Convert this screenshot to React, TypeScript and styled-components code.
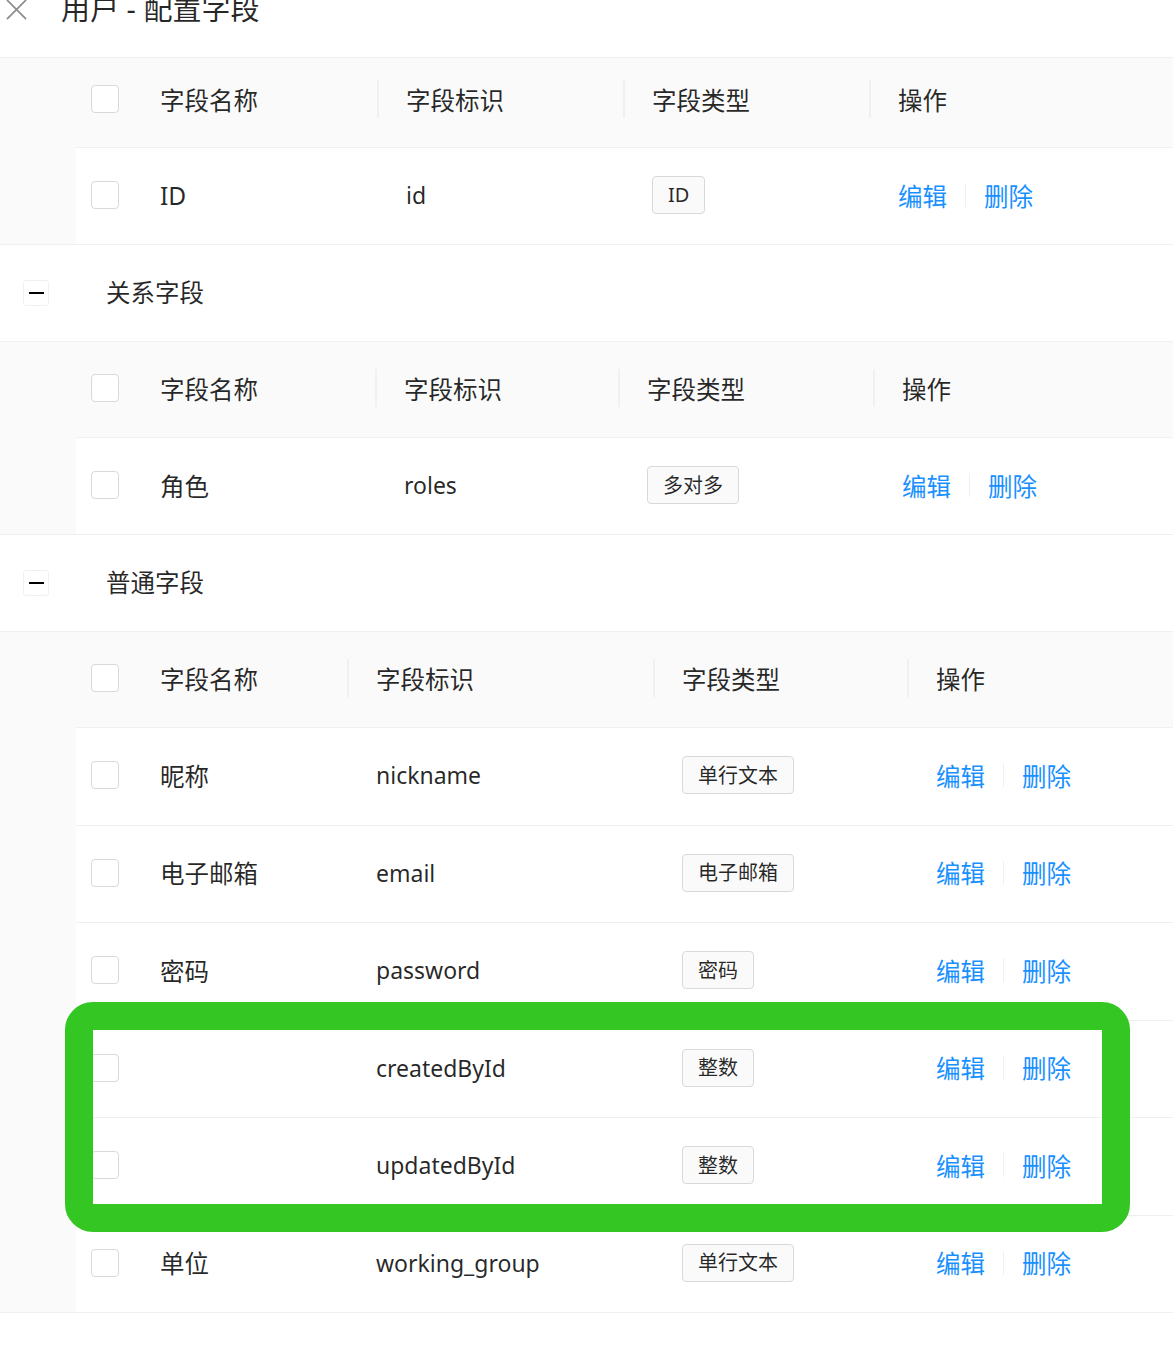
import React from 'react';
import styled, { createGlobalStyle } from 'styled-components';

type Field = { name: string; key: string; type: string };

const GlobalStyle = createGlobalStyle`
  body {
    margin: 0;
    background: #fff;
    font-family: "Noto Sans", "Noto Sans CJK SC", sans-serif;
    color: rgba(0, 0, 0, 0.85);
  }
`;

const TABLE_1 = '55px 246px 246px 246px 1fr';
const TABLE_2 = '55px 244px 243px 255px 1fr';
const TABLE_3 = '55px 216px 306px 254px 1fr';

const systemFields: Field[] = [{ name: 'ID', key: 'id', type: 'ID' }];
const relationFields: Field[] = [{ name: '角色', key: 'roles', type: '多对多' }];
const normalFields: Field[] = [
  { name: '昵称', key: 'nickname', type: '单行文本' },
  { name: '电子邮箱', key: 'email', type: '电子邮箱' },
  { name: '密码', key: 'password', type: '密码' },
];
const markedFields: Field[] = [
  { name: '', key: 'createdById', type: '整数' },
  { name: '', key: 'updatedById', type: '整数' },
];
const tailFields: Field[] = [{ name: '单位', key: 'working_group', type: '单行文本' }];

const CloseIcon = () => (
  <CloseSvg viewBox="0 0 24 24">
    <path d="M2 2 L22 22 M22 2 L2 22" stroke="currentColor" strokeWidth="1.8" fill="none" />
  </CloseSvg>
);

const HeadRow = ({ cols, height, lift = 3 }: { cols: string; height: number; lift?: number }) => (
  <HeaderRow $cols={cols} $h={height} $lift={lift}>
    <CheckCell>
      <Checkbox />
    </CheckCell>
    <Cell>字段名称</Cell>
    <Cell $sep>字段标识</Cell>
    <Cell $sep>字段类型</Cell>
    <Cell $sep>操作</Cell>
  </HeaderRow>
);

const FieldRow = ({ field, cols, height, last }: { field: Field; cols: string; height: number; last?: boolean }) => (
  <BodyRow $cols={cols} $h={height} $last={last}>
    <CheckCell>
      <Checkbox />
    </CheckCell>
    <Cell>{field.name}</Cell>
    <Cell $code>{field.key}</Cell>
    <Cell>
      <Tag>{field.type}</Tag>
    </Cell>
    <Cell>
      <ActionLink>编辑</ActionLink>
      <ActionDivider />
      <ActionLink>删除</ActionLink>
    </Cell>
  </BodyRow>
);

const Group = ({ label }: { label: string }) => (
  <GroupRow>
    <CollapseButton>
      <Minus />
    </CollapseButton>
    <GroupLabel>{label}</GroupLabel>
  </GroupRow>
);

const App = () => {
  return (
    <Page>
      <GlobalStyle />
      <Header>
        <CloseIcon />
        <Title>用户 - 配置字段</Title>
      </Header>

      <ExpandedRow>
        <NestedTable>
          <HeadRow cols={TABLE_1} height={89} lift={7} />
          {systemFields.map((f, i) => (
            <FieldRow key={f.key} field={f} cols={TABLE_1} height={96} last={i === systemFields.length - 1} />
          ))}
        </NestedTable>
      </ExpandedRow>

      <Group label="关系字段" />
      <ExpandedRow>
        <NestedTable>
          <HeadRow cols={TABLE_2} height={95} />
          {relationFields.map((f, i) => (
            <FieldRow key={f.key} field={f} cols={TABLE_2} height={96} last={i === relationFields.length - 1} />
          ))}
        </NestedTable>
      </ExpandedRow>

      <Group label="普通字段" />
      <ExpandedRow>
        <NestedTable>
          <HeadRow cols={TABLE_3} height={95} />
          {normalFields.map((f) => (
            <FieldRow key={f.key} field={f} cols={TABLE_3} height={96.5} />
          ))}
          <Marked>
            {markedFields.map((f) => (
              <FieldRow key={f.key} field={f} cols={TABLE_3} height={96.5} />
            ))}
            <MarkFrame />
          </Marked>
          {tailFields.map((f, i) => (
            <FieldRow key={f.key} field={f} cols={TABLE_3} height={96.5} last={i === tailFields.length - 1} />
          ))}
        </NestedTable>
      </ExpandedRow>
    </Page>
  );
};

const Page = styled.div`
  width: 100%;
  padding-bottom: 40px;
`;

const Header = styled.div`
  height: 58px;
  box-sizing: border-box;
  display: flex;
  align-items: flex-start;
  gap: 33px;
  padding-left: 5px;
  border-bottom: 1px solid #f0f0f0;
`;

const CloseSvg = styled.svg`
  width: 23px;
  height: 23px;
  margin-top: -2px;
  color: #8c8c8c;
  flex-shrink: 0;
`;

const Title = styled.div`
  font-size: 29px;
  line-height: 18px;
  color: rgba(0, 0, 0, 0.85);
`;

const ExpandedRow = styled.div`
  background: #fafafa;
  padding-left: 76px;
  border-bottom: 1px solid #f0f0f0;
`;

const NestedTable = styled.div`
  background: #fff;
  display: flex;
  flex-direction: column;
`;

const HeaderRow = styled.div<{ $cols: string; $h: number; $lift: number }>`
  display: grid;
  grid-template-columns: ${(p) => p.$cols};
  height: ${(p) => p.$h + 1}px;
  box-sizing: border-box;
  padding-bottom: ${(p) => p.$lift}px;
  background: #fafafa;
  border-bottom: 1px solid #f0f0f0;
  font-size: 24.5px;
`;

const BodyRow = styled.div<{ $cols: string; $h: number; $last?: boolean }>`
  display: grid;
  grid-template-columns: ${(p) => p.$cols};
  height: ${(p) => (p.$last ? p.$h : p.$h + 1)}px;
  box-sizing: border-box;
  padding-bottom: 2px;
  border-bottom: ${(p) => (p.$last ? 'none' : '1px solid #f0f0f0')};
  font-size: 24.5px;
`;

const Cell = styled.div<{ $sep?: boolean; $code?: boolean }>`
  position: relative;
  display: flex;
  align-items: center;
  padding-left: 29px;
  white-space: nowrap;
  font-size: ${(p) => (p.$code ? '23px' : 'inherit')};
  &::before {
    content: '';
    display: ${(p) => (p.$sep ? 'block' : 'none')};
    position: absolute;
    left: 0;
    top: 50%;
    width: 2px;
    height: 38px;
    transform: translateY(-50%);
    background: #f0f0f0;
  }
`;

const CheckCell = styled.div`
  display: flex;
  align-items: center;
  padding-left: 15px;
`;

const Checkbox = styled.span`
  display: block;
  width: 28px;
  height: 28px;
  box-sizing: border-box;
  border: 1px solid #d9d9d9;
  border-radius: 4px;
  background: #fff;
`;

const Tag = styled.span`
  display: inline-flex;
  align-items: center;
  height: 38px;
  box-sizing: border-box;
  padding: 0 15px 2px;
  border: 1px solid #d9d9d9;
  border-radius: 4px;
  background: #fafafa;
  font-size: 20px;
  color: rgba(0, 0, 0, 0.85);
`;

const ActionLink = styled.a`
  color: #1890ff;
  font-size: 24.5px;
  cursor: pointer;
`;

const ActionDivider = styled.span`
  width: 1px;
  height: 24px;
  margin: 0 18px;
  background: #f0f0f0;
`;

const GroupRow = styled.div`
  height: 97px;
  box-sizing: border-box;
  display: flex;
  align-items: center;
  padding-left: 23px;
  border-bottom: 1px solid #f0f0f0;
`;

const CollapseButton = styled.button`
  width: 26px;
  height: 26px;
  padding: 0;
  display: flex;
  align-items: center;
  justify-content: center;
  border: 1px solid #f0f0f0;
  border-radius: 3px;
  background: #fff;
  cursor: pointer;
`;

const Minus = styled.span`
  display: block;
  width: 15px;
  height: 2px;
  background: #000;
`;

const GroupLabel = styled.span`
  margin-left: 57px;
  margin-bottom: 3px;
  font-size: 24.5px;
`;

const Marked = styled.div`
  position: relative;
`;

const MarkFrame = styled.div`
  position: absolute;
  left: -11px;
  top: -19px;
  width: 1065px;
  height: 230px;
  box-sizing: border-box;
  border: 28px solid #34c724;
  border-radius: 28px;
  pointer-events: none;
`;

export default App;
